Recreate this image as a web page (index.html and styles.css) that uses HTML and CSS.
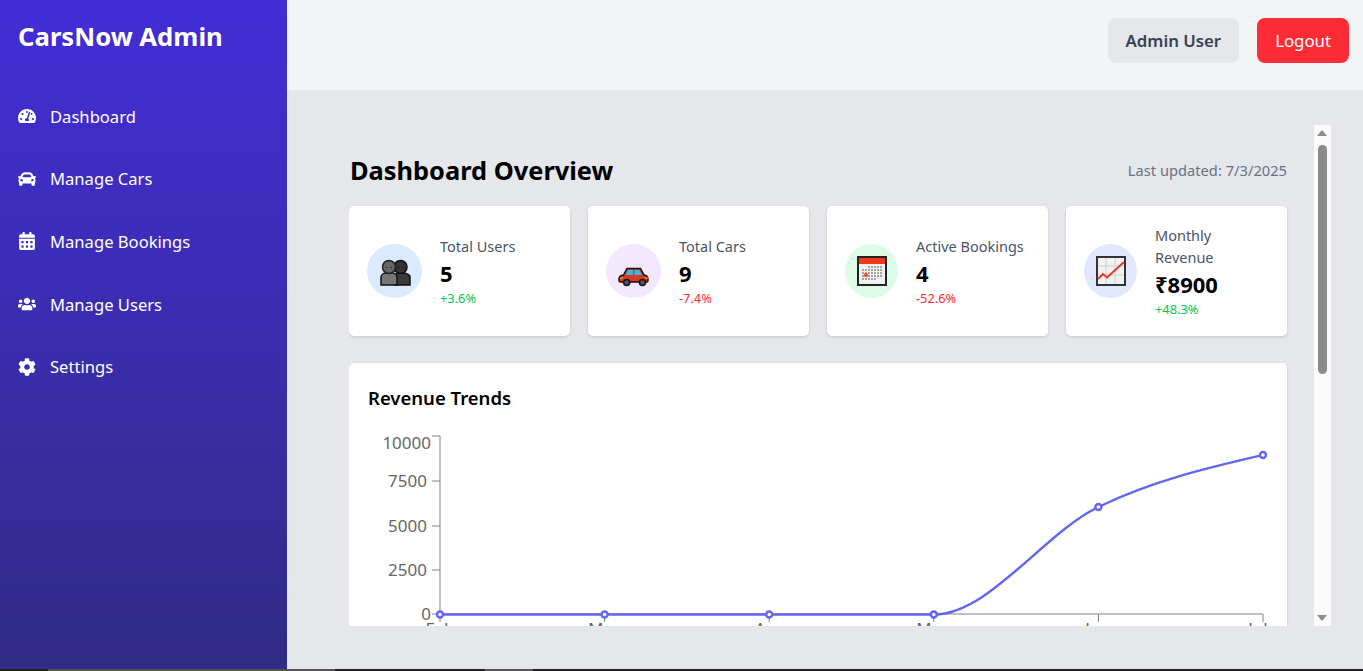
FILE: index.html
```html
<!DOCTYPE html>
<html>
<head>
	<meta charset="utf-8">
	<title>CarsNow Admin</title>
	<link rel="stylesheet" href="styles.css">
</head>
<body>
	<div class="app">
		<aside class="sidebar">
			<h1 class="brand">CarsNow Admin</h1>
			<nav class="nav">
				<a class="nav-item">
					<svg class="nav-icon" viewBox="0 0 576 512"><path d="M288 32C128.94 32 0 160.94 0 320c0 52.8 14.25 102.26 39.06 144.8 5.61 9.62 16.3 15.2 27.44 15.2h443c11.14 0 21.83-5.58 27.44-15.2C561.75 422.26 576 372.8 576 320c0-159.06-128.94-288-288-288zm0 64c14.71 0 26.58 10.13 30.32 23.65-1.11 2.26-2.64 4.23-3.45 6.67l-9.22 27.67c-5.13 3.49-10.97 6.01-17.64 6.01-17.67 0-32-14.33-32-32S270.33 96 288 96zM96 384c-17.67 0-32-14.33-32-32s14.33-32 32-32 32 14.33 32 32-14.33 32-32 32zm48-160c-17.67 0-32-14.33-32-32s14.33-32 32-32 32 14.33 32 32-14.33 32-32 32zm246.77-72.41l-61.33 184C343.13 347.33 352 364.54 352 384c0 11.72-3.38 22.55-8.88 32H232.88c-5.5-9.45-8.88-20.28-8.88-32 0-33.94 26.5-61.43 59.9-63.59l61.34-184.01c4.17-12.56 17.73-19.45 30.36-15.17 12.57 4.19 19.35 17.77 15.17 30.36zm14.66 57.2l15.52-46.55c3.47-1.29 7.13-2.23 11.05-2.23 17.67 0 32 14.33 32 32s-14.33 32-32 32c-11.38-.01-20.89-6.27-26.57-15.22zM480 384c-17.67 0-32-14.33-32-32s14.33-32 32-32 32 14.33 32 32-14.33 32-32 32z"/></svg>
					<span>Dashboard</span>
				</a>
				<a class="nav-item">
					<svg class="nav-icon" viewBox="0 0 512 512"><path d="M499.99 176h-59.87l-16.64-41.6C406.38 91.63 365.57 64 319.5 64h-127c-46.06 0-86.88 27.63-103.99 70.4L71.87 176H12.01C4.2 176-1.53 183.34.37 190.91l6 24C7.7 220.25 12.5 224 18.01 224h20.07C24.65 235.73 16 252.78 16 272v48c0 16.12 6.16 30.67 16 41.93V416c0 17.67 14.33 32 32 32h32c17.67 0 32-14.33 32-32v-32h256v32c0 17.67 14.33 32 32 32h32c17.67 0 32-14.33 32-32v-54.07c9.84-11.25 16-25.8 16-41.93v-48c0-19.22-8.65-36.27-22.07-48H494c5.51 0 10.31-3.75 11.64-9.09l6-24c1.89-7.57-3.84-14.91-11.65-14.91zm-352.06-17.83c7.29-18.22 24.94-30.17 44.57-30.17h127c19.63 0 37.28 11.95 44.57 30.17L384 208H128l19.93-49.83zM96 319.8c-19.2 0-32-12.76-32-31.9S76.8 256 96 256s48 28.71 48 47.85-28.8 15.95-48 15.95zm320 0c-19.2 0-48 3.19-48-15.95S396.8 256 416 256s32 12.76 32 31.9-12.8 31.9-32 31.9z"/></svg>
					<span>Manage Cars</span>
				</a>
				<a class="nav-item">
					<svg class="nav-icon" viewBox="0 0 448 512"><path d="M0 464c0 26.5 21.5 48 48 48h352c26.5 0 48-21.5 48-48V192H0v272zm320-196c0-6.6 5.4-12 12-12h40c6.6 0 12 5.4 12 12v40c0 6.6-5.4 12-12 12h-40c-6.6 0-12-5.4-12-12v-40zm0 128c0-6.6 5.4-12 12-12h40c6.6 0 12 5.4 12 12v40c0 6.6-5.4 12-12 12h-40c-6.6 0-12-5.4-12-12v-40zM192 268c0-6.6 5.4-12 12-12h40c6.6 0 12 5.4 12 12v40c0 6.6-5.4 12-12 12h-40c-6.6 0-12-5.4-12-12v-40zm0 128c0-6.6 5.4-12 12-12h40c6.6 0 12 5.4 12 12v40c0 6.6-5.4 12-12 12h-40c-6.6 0-12-5.4-12-12v-40zM64 268c0-6.6 5.4-12 12-12h40c6.6 0 12 5.4 12 12v40c0 6.6-5.4 12-12 12H76c-6.6 0-12-5.4-12-12v-40zm0 128c0-6.6 5.4-12 12-12h40c6.6 0 12 5.4 12 12v40c0 6.6-5.4 12-12 12H76c-6.6 0-12-5.4-12-12v-40zM400 64h-48V16c0-8.8-7.2-16-16-16h-32c-8.8 0-16 7.2-16 16v48H160V16c0-8.8-7.2-16-16-16h-32c-8.8 0-16 7.2-16 16v48H48C21.5 64 0 85.5 0 112v48h448v-48c0-26.5-21.5-48-48-48z"/></svg>
					<span>Manage Bookings</span>
				</a>
				<a class="nav-item">
					<svg class="nav-icon" viewBox="0 0 640 512"><path d="M96 224c35.3 0 64-28.7 64-64s-28.7-64-64-64-64 28.7-64 64 28.7 64 64 64zm448 0c35.3 0 64-28.7 64-64s-28.7-64-64-64-64 28.7-64 64 28.7 64 64 64zm32 32h-64c-17.6 0-33.5 7.1-45.1 18.6 40.3 22.1 68.9 62 75.1 109.4h66c17.7 0 32-14.3 32-32v-32c0-35.3-28.7-64-64-64zm-256 0c61.9 0 112-50.1 112-112S381.9 32 320 32 208 82.1 208 144s50.1 112 112 112zm76.8 32h-8.3c-20.8 10-43.9 16-68.5 16s-47.6-6-68.5-16h-8.3C179.6 288 128 339.6 128 403.2V432c0 26.5 21.5 48 48 48h288c26.5 0 48-21.5 48-48v-28.8c0-63.6-51.6-115.2-115.2-115.2zm-223.7-13.4C161.5 263.1 145.6 256 128 256H64c-35.3 0-64 28.7-64 64v32c0 17.7 14.3 32 32 32h65.9c6.3-47.4 34.9-87.3 75.2-109.4z"/></svg>
					<span>Manage Users</span>
				</a>
				<a class="nav-item">
					<svg class="nav-icon" viewBox="0 0 512 512"><path d="M487.4 315.7l-42.6-24.6c4.3-23.2 4.3-47 0-70.2l42.6-24.6c4.9-2.8 7.1-8.6 5.5-14-11.1-35.6-30-67.8-54.7-94.6-3.8-4.1-10-5.1-14.8-2.3L380.8 110c-17.9-15.4-38.5-27.3-60.8-35.1V25.8c0-5.6-3.9-10.5-9.4-11.7-36.7-8.2-74.3-7.8-109.2 0-5.5 1.2-9.4 6.1-9.4 11.7V75c-22.2 7.9-42.8 19.8-60.8 35.1L88.7 85.5c-4.9-2.8-11-1.9-14.8 2.3-24.7 26.7-43.6 58.9-54.7 94.6-1.7 5.4.6 11.2 5.5 14L67.3 221c-4.3 23.2-4.3 47 0 70.2l-42.6 24.6c-4.9 2.8-7.1 8.6-5.5 14 11.1 35.6 30 67.8 54.7 94.6 3.8 4.1 10 5.1 14.8 2.3l42.6-24.6c17.9 15.4 38.5 27.3 60.8 35.1v49.2c0 5.6 3.9 10.5 9.4 11.7 36.7 8.2 74.3 7.8 109.2 0 5.5-1.2 9.4-6.1 9.4-11.7v-49.2c22.2-7.9 42.8-19.8 60.8-35.1l42.6 24.6c4.9 2.8 11 1.9 14.8-2.3 24.7-26.7 43.6-58.9 54.7-94.6 1.5-5.5-.7-11.3-5.6-14.1zM256 336c-44.1 0-80-35.9-80-80s35.9-80 80-80 80 35.9 80 80-35.9 80-80 80z"/></svg>
					<span>Settings</span>
				</a>
			</nav>
		</aside>

		<div class="right">
			<header class="topbar">
				<div class="user-chip">Admin User</div>
				<button class="logout">Logout</button>
			</header>

			<main class="main">
				<div class="scroll-box">
					<div class="scroll-content">
						<div class="title-row">
							<h2 class="title">Dashboard Overview</h2>
							<span class="updated">Last updated: 7/3/2025</span>
						</div>

						<div class="stats">
							<div class="stat-card">
								<div class="stat-icon bg-blue">
									<svg viewBox="0 0 32 32" width="32" height="32">
										<path d="M16 30V21c0-2 3-3.500 6-3.500s9 1.500 9 4.500V30z" fill="#3a3a3a" stroke="#111" stroke-width="1.500"/>
										<circle cx="21.500" cy="12" r="6.500" fill="#333" stroke="#111" stroke-width="1.500"/>
										<path d="M2 30V22c0-3 4-4.500 8-4.500s8 1.500 8 4.500V30z" fill="#777" stroke="#111" stroke-width="1.500"/>
										<circle cx="10" cy="12" r="6.500" fill="#666" stroke="#222" stroke-width="1.500"/>
										<path d="M7 12.500h1.200M11.500 12.500h1.200M19 12.500h1.200M23.500 12.500h1.200" stroke="#1a1a1a" stroke-width="1"/>
									</svg>
								</div>
								<div class="stat-text">
									<p class="stat-label">Total Users</p>
									<p class="stat-value">5</p>
									<p class="stat-change up">+3.6%</p>
								</div>
							</div>

							<div class="stat-card">
								<div class="stat-icon bg-purple">
									<svg viewBox="0 0 32 32" width="32" height="32">
										<path d="M1 24c0-2.500 1.500-3.500 4.500-4l3.500-6.500h13.500l3.500 6.500c2.500.3 4 1.500 4 4v1.500c0 1-.7 1.500-1.500 1.500h-26c-.8 0-1.500-.5-1.500-1.500z" fill="#d93a1e" stroke="#111" stroke-width="1.500"/>
										<path d="M10 15h5v5H7.500zM16.500 15h4.700l2.600 5h-7.300z" fill="#38b8e8"/>
										<circle cx="8.700" cy="27.500" r="3" fill="#555" stroke="#111" stroke-width="1.500"/>
										<circle cx="24.500" cy="27.500" r="3" fill="#555" stroke="#111" stroke-width="1.500"/>
										<path d="M2 23h3M27.500 23h3" stroke="#f6b73c" stroke-width="1.200"/>
									</svg>
								</div>
								<div class="stat-text">
									<p class="stat-label">Total Cars</p>
									<p class="stat-value">9</p>
									<p class="stat-change down">-7.4%</p>
								</div>
							</div>

							<div class="stat-card">
								<div class="stat-icon narrow bg-green">
									<svg viewBox="0 0 30 32" width="30" height="32">
										<rect x="1" y="2" width="28" height="28" fill="#f0f0f0" stroke="#222" stroke-width="2"/>
										<rect x="2" y="3" width="26" height="6" fill="#f0391b"/>
										<path d="M11 12h15M5 15h21M5 18h21M5 21h21M5 24h15" stroke="#a5a5a5" stroke-width="2" stroke-dasharray="2 1"/>
										<circle cx="9" cy="20" r="2.200" fill="#ee5a3c"/>
									</svg>
								</div>
								<div class="stat-text">
									<p class="stat-label">Active Bookings</p>
									<p class="stat-value">4</p>
									<p class="stat-change down">-52.6%</p>
								</div>
							</div>

							<div class="stat-card">
								<div class="stat-icon narrow bg-indigo">
									<svg viewBox="0 0 30 32" width="30" height="32">
										<rect x="1" y="2" width="28" height="28" fill="#f2f2f2" stroke="#333" stroke-width="2"/>
										<path d="M10 3v26M19 3v26M2 11h26M2 20h26" stroke="#cfcfcf" stroke-width="1"/>
										<path d="M2 24l5-5 4 3.500L28 7" fill="none" stroke="#e8391d" stroke-width="2"/>
									</svg>
								</div>
								<div class="stat-text">
									<p class="stat-label">Monthly Revenue</p>
									<p class="stat-value">₹8900</p>
									<p class="stat-change up">+48.3%</p>
								</div>
							</div>
						</div>

						<section class="chart-card">
							<h3 class="chart-title">Revenue Trends</h3>
							<svg class="chart" width="900" height="260" viewBox="0 0 900 260">
								<g class="axis">
									<path d="M91 27V205M83 27H91M83 72H91M83 117H91M83 161H91M83 205H91"/>
									<path d="M91 205H914M91 205v8M255.600 205v8M420.200 205v8M584.800 205v8M749.400 205v8M914 205v8"/>
								</g>
								<g class="y-labels">
									<text x="82" y="40">10000</text>
									<text x="78" y="78">7500</text>
									<text x="78" y="123">5000</text>
									<text x="78" y="167">2500</text>
									<text x="82" y="211">0</text>
								</g>
								<g class="x-labels">
									<text x="91" y="226">Feb</text>
									<text x="255" y="226">Mar</text>
									<text x="420" y="226">Apr</text>
									<text x="584" y="226">May</text>
									<text x="749" y="226">Jun</text>
									<text x="909" y="226">Jul</text>
								</g>
								<path class="line" d="M91 205.500H584.800C639.500 205.500 694.500 124.600 749.400 98C804.300 71.400 859.300 58.700 914 46"/>
								<g class="dots">
									<circle cx="91" cy="205.500" r="3"/>
									<circle cx="255.600" cy="205.500" r="3"/>
									<circle cx="420.200" cy="205.500" r="3"/>
									<circle cx="584.800" cy="205.500" r="3"/>
									<circle cx="749.400" cy="98" r="3"/>
									<circle cx="914" cy="46" r="3"/>
								</g>
							</svg>
						</section>
					</div>

					<div class="scrollbar">
						<span class="arrow arrow-up"></span>
						<span class="thumb"></span>
						<span class="arrow arrow-down"></span>
					</div>
				</div>
			</main>
		</div>
	</div>
	<div class="taskbar"></div>
</body>
</html>
```

FILE: styles.css
```css
* {
	padding: 0;
	margin: 0;
	box-sizing: border-box;
}
html, body {
	height: 100%;
	overflow: hidden;
}
body {
	font-family: "Noto Sans", "Liberation Sans", sans-serif;
	background-color: #e5e7eb;
}
.app {
	display: flex;
	height: 669px;
}
.taskbar {
	height: 2px;
	background: linear-gradient(to right, #202020 48px, #555 48px, #555 335px, #202020 335px, #202020 485px, #555 485px, #555 533px, #202020 533px);
}

/* sidebar */
.sidebar {
	width: 287px;
	flex-shrink: 0;
	padding: 19px 18px 18px;
	color: #fff;
	background: linear-gradient(to bottom, #432dd7, #312c85);
}
.brand {
	font-size: 25.7px;
	line-height: 36px;
	font-weight: 700;
}
.nav {
	display: flex;
	flex-direction: column;
	gap: 36.7px;
	margin-top: 48px;
}
.nav-item {
	display: flex;
	align-items: center;
	gap: 14px;
	height: 26px;
	font-size: 16.6px;
}
.nav-icon {
	width: 18px;
	height: 18px;
	fill: #fff;
	flex-shrink: 0;
}

/* header */
.right {
	flex: 1;
	display: flex;
	flex-direction: column;
	min-width: 0;
}
.topbar {
	height: 90px;
	flex-shrink: 0;
	display: flex;
	align-items: flex-start;
	justify-content: flex-end;
	gap: 18px;
	padding: 18px 14px 0 0;
	background-color: #f3f4f6;
}
.user-chip, .logout {
	height: 45px;
	border-radius: 8px;
	font-size: 16.8px;
	line-height: 45px;
	font-family: inherit;
	border: 0;
}
.user-chip {
	padding: 0 18px;
	font-weight: 600;
	color: #364153;
	background-color: #e5e7eb;
}
.logout {
	padding: 0 18px;
	color: #fff;
	background-color: #fb2c36;
}

/* content */
.main {
	flex: 1;
	padding: 35px 32px 43px 62px;
	min-height: 0;
}
.scroll-box {
	display: flex;
	height: 100%;
}
.scroll-content {
	flex: 1;
	min-width: 0;
	height: 100%;
	overflow: hidden;
	padding-right: 27px;
}
.title-row {
	display: flex;
	align-items: center;
	justify-content: space-between;
	height: 42px;
	margin-top: 24px;
	padding-left: 1px;
}
.title {
	font-size: 25.4px;
	font-weight: 700;
	color: #000;
}
.updated {
	font-size: 14.7px;
	color: #6a7282;
}
.stats {
	display: grid;
	grid-template-columns: repeat(4, 1fr);
	gap: 18px;
	margin-top: 15px;
}
.stat-card {
	display: flex;
	align-items: center;
	height: 130px;
	padding: 0 18px;
	background-color: #fff;
	border-radius: 5px;
	box-shadow: 0 1px 3px rgba(0,0,0,0.15);
}
.stat-icon {
	width: 55px;
	height: 54px;
	flex-shrink: 0;
	display: flex;
	align-items: center;
	justify-content: center;
	border-radius: 50%;
	margin-right: 18px;
}
.stat-icon.narrow {
	width: 53px;
}
.bg-blue { background-color: #dbeafe; }
.bg-purple { background-color: #f3e8ff; }
.bg-green { background-color: #dcfce7; }
.bg-indigo { background-color: #e0e7ff; }
.stat-label {
	font-size: 14.5px;
	line-height: 22px;
	color: #4a5565;
}
.stat-value {
	font-size: 22px;
	line-height: 32px;
	font-weight: 700;
	color: #000;
}
.stat-change {
	font-size: 12.8px;
	line-height: 18px;
}
.up { color: #00c950; }
.down { color: #fb2c36; }

.chart-card {
	margin-top: 27px;
	height: 320px;
	padding: 18px 18px 18px 19px;
	background-color: #fff;
	border-radius: 5px;
	box-shadow: 0 1px 3px rgba(0,0,0,0.15);
}
.chart-title {
	font-size: 18.5px;
	line-height: 34px;
	font-weight: 600;
	color: #000;
}
.chart {
	display: block;
	margin: -6px 0 0 -19px;
	overflow: visible;
}
.axis path {
	fill: none;
	stroke: #808080;
	stroke-width: 1;
}
.y-labels text, .x-labels text {
	font-size: 17px;
	fill: #666;
}
.y-labels text {
	text-anchor: end;
}
.x-labels text {
	text-anchor: middle;
}
.line {
	fill: none;
	stroke: #6366f1;
	stroke-width: 2.4;
}
.dots circle {
	fill: #fff;
	stroke: #6366f1;
	stroke-width: 2.4;
}

/* scrollbar */
.scrollbar {
	width: 17px;
	flex-shrink: 0;
	position: relative;
	background-color: #fbfbfb;
}
.thumb {
	position: absolute;
	left: 4px;
	top: 20px;
	width: 9px;
	height: 229px;
	border-radius: 5px;
	background-color: #8b8b8b;
}
.arrow {
	position: absolute;
	left: 3px;
	width: 0;
	height: 0;
	border-left: 5.5px solid transparent;
	border-right: 5.5px solid transparent;
}
.arrow-up {
	top: 5px;
	border-bottom: 6px solid #8b8b8b;
}
.arrow-down {
	bottom: 5px;
	border-top: 6px solid #8b8b8b;
}
```
